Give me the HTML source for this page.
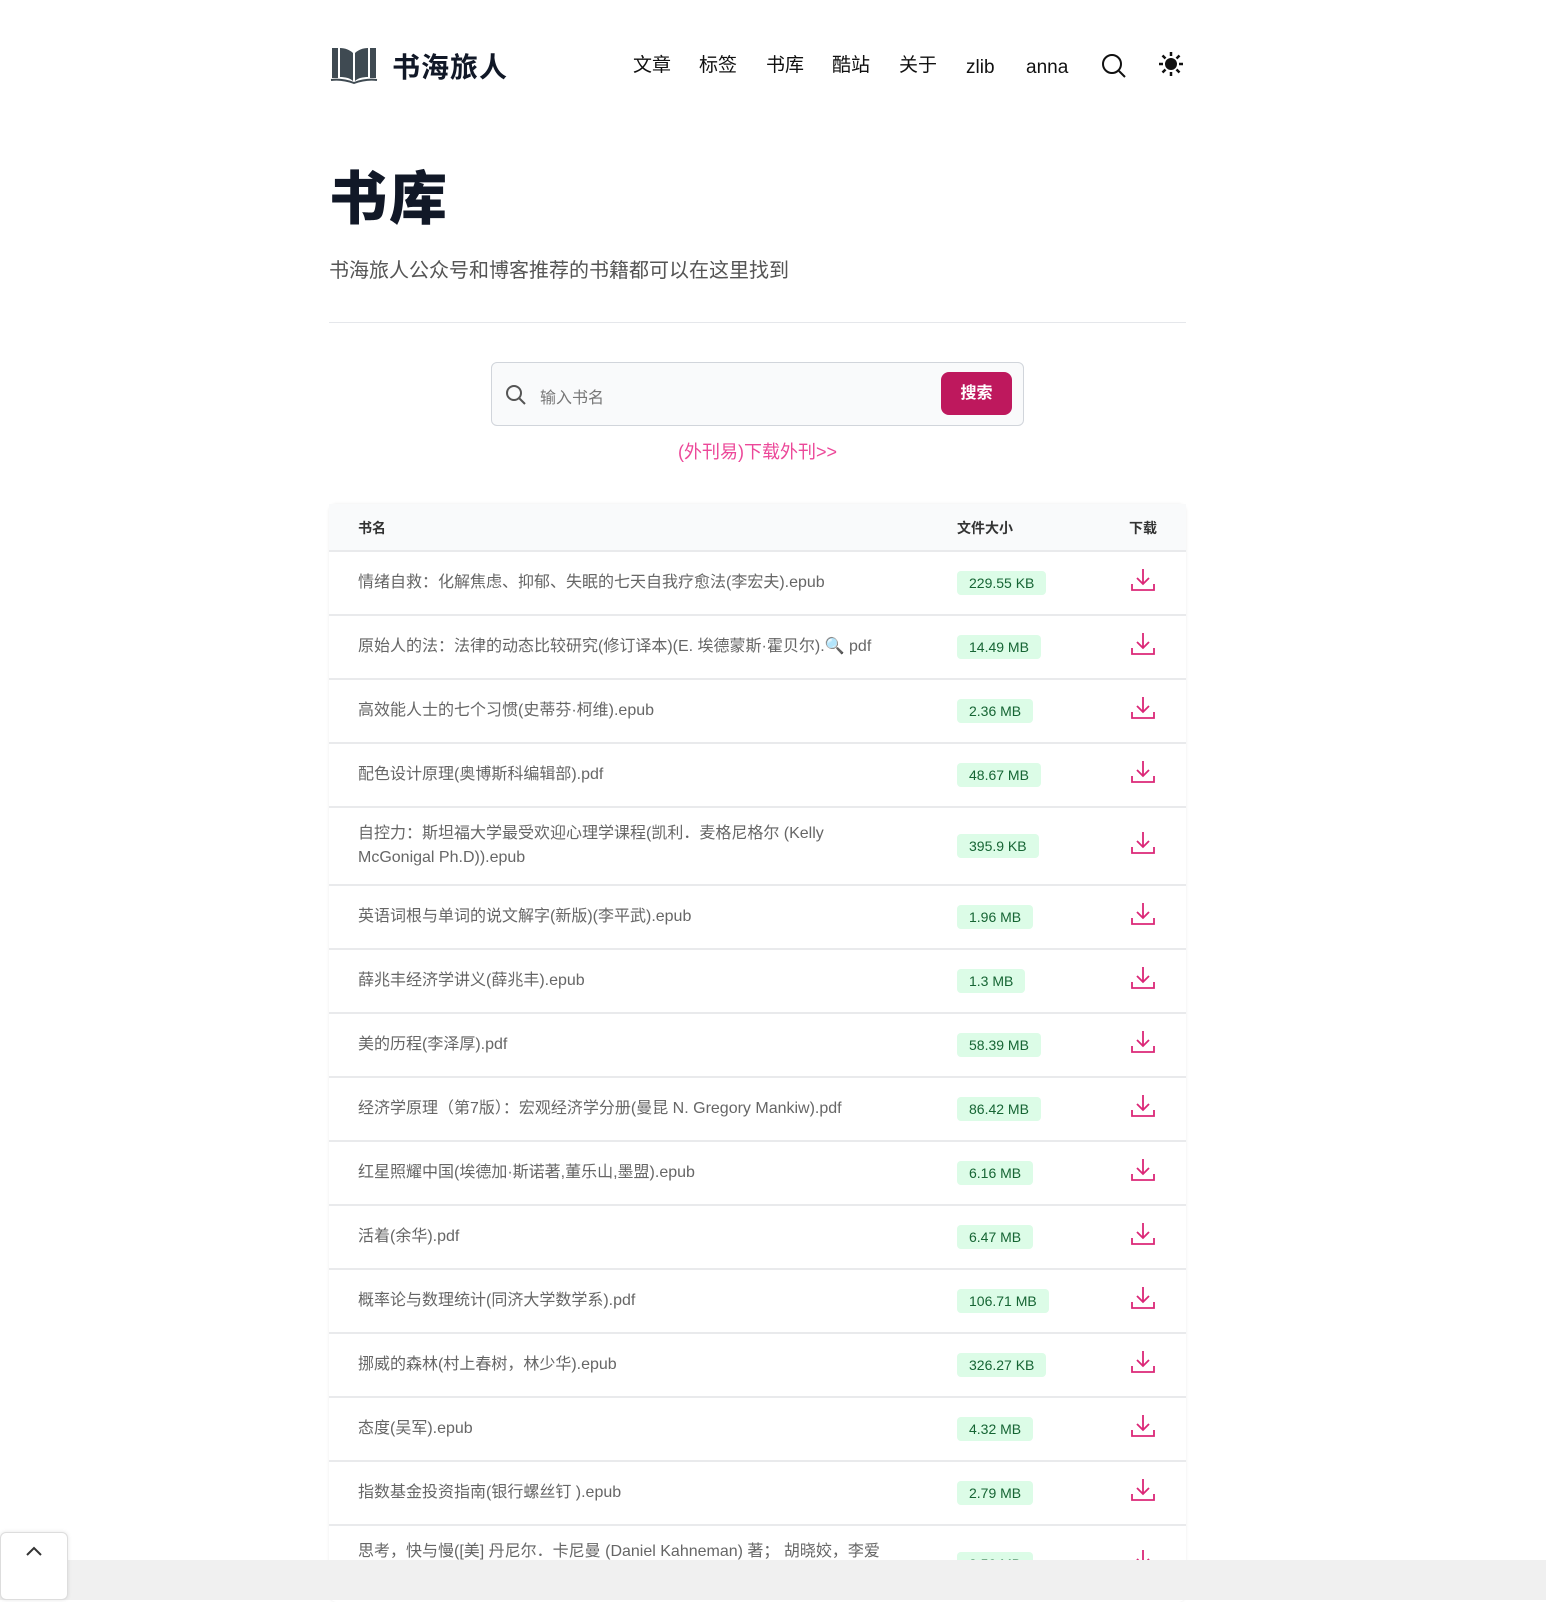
<!DOCTYPE html>
<html><head><meta charset="utf-8"><style>
*{margin:0;padding:0;box-sizing:border-box}
body{width:1546px;height:1600px;overflow:hidden;background:#fff;font-family:"Liberation Sans","Noto Sans CJK SC",sans-serif;color:#111827;position:relative}
.wrap{position:absolute;left:329px;width:857px;top:0}
.nav{position:absolute;top:0;left:0;width:857px;height:130px}
.logo{position:absolute;left:0;top:45px}
.brand{position:absolute;left:63px;top:46px;font-size:28px;font-weight:bold;letter-spacing:1px}
.menu{position:absolute;top:52px;font-size:19px;color:#111;height:28px;line-height:28px}
h1{position:absolute;top:152px;left:0;font-size:58px;font-weight:900;letter-spacing:2px}
.sub{position:absolute;top:254px;left:0;font-size:20px;color:#555}
.hr{position:absolute;top:322px;left:0;width:857px;height:1px;background:#e5e7eb}
.search{position:absolute;left:162px;top:362px;width:533px;height:64px;border:1px solid #d1d5db;border-radius:6px;background:#f9fafb}
.search .ph{position:absolute;left:48px;top:21px;font-size:16px;color:#777}
.btn{position:absolute;right:11px;top:9px;width:71px;height:43px;background:#be185d;border-radius:8px;color:#fff;font-size:16px;font-weight:bold;text-align:center;line-height:43px}
.wk{position:absolute;top:438px;left:0;width:857px;text-align:center;color:#ec4899;font-size:18px}
.table{position:absolute;top:504px;left:0;width:857px;border-radius:8px;box-shadow:0 0 3px rgba(0,0,0,.08)}
.th{height:46px;background:#f9fafb;position:relative;font-size:14px;color:#333;font-weight:bold}
.row{position:relative;border-top:2px solid #e9eaec;font-size:16px;color:#666}
.c1{position:absolute;left:29px;width:540px;line-height:24px}
.c2{position:absolute;left:628px}
.badge{display:inline-block;background:#dcfce7;color:#166534;font-size:14px;padding:0 12px;height:24px;line-height:24px;border-radius:4px}
.dl{position:absolute;left:801px}
.bar{position:absolute;left:0;top:1560px;width:1546px;height:40px;background:#f0f0f0}
.top{position:absolute;left:0;top:1532px;width:68px;height:68px;background:#fff;border:1px solid #ddd;border-radius:6px;box-shadow:0 0 4px rgba(0,0,0,.1)}
</style></head><body>
<div class="wrap">
 <div class="nav">
  <svg class="logo" width="50" height="40" viewBox="0 0 50 40"><path d="M3 3h6v30h-6zM11 3c5 0 10 2 13 5v28c-3-3-8-4-13-4zM26 8c3-3 8-5 13-5v29c-5 0-10 1-13 4zM41 3h6v30h-6z" fill="#3f4a52"/><path d="M2 35c8-1 15 0 23 3 8-3 15-4 23-3" stroke="#3f4a52" stroke-width="2" fill="none"/></svg>
  <div class="brand">书海旅人</div>
  <div class="menu" style="left:304px">文章</div>
  <div class="menu" style="left:370px">标签</div>
  <div class="menu" style="left:437px">书库</div>
  <div class="menu" style="left:503px">酷站</div>
  <div class="menu" style="left:570px">关于</div>
  <div class="menu" style="left:637px;top:54px">zlib</div>
  <div class="menu" style="left:697px;top:54px">anna</div>
  <svg style="position:absolute;left:772px;top:53px" width="26" height="26" viewBox="0 0 26 26"><circle cx="11" cy="11" r="9" stroke="#111" stroke-width="2" fill="none"/><path d="M18 18l6 6" stroke="#111" stroke-width="2"/></svg>
  <svg style="position:absolute;left:829px;top:51px" width="26" height="26" viewBox="0 0 26 26"><circle cx="13" cy="13" r="6" fill="#111"/><g stroke="#111" stroke-width="2.5"><path d="M13 1v4M13 21v4M1 13h4M21 13h4M4.5 4.5l3 3M18.5 18.5l3 3M4.5 21.5l3-3M18.5 7.5l3-3"/></g></svg>
 </div>
 <h1>书库</h1>
 <div class="sub">书海旅人公众号和博客推荐的书籍都可以在这里找到</div>
 <div class="hr"></div>
 <div class="search">
  <svg style="position:absolute;left:13px;top:21px" width="22" height="22" viewBox="0 0 22 22"><circle cx="9" cy="9" r="7" stroke="#555" stroke-width="2" fill="none"/><path d="M14 14l6 6" stroke="#555" stroke-width="2"/></svg>
  <div class="ph">输入书名</div><div class="btn">搜索</div>
 </div>
 <div class="wk">(外刊易)下载外刊&gt;&gt;</div>
 <div class="table">
  <div class="th"><span style="position:absolute;left:29px;top:14px">书名</span><span style="position:absolute;left:628px;top:14px">文件大小</span><span style="position:absolute;left:800px;top:14px">下载</span></div>
  <div id="rows"></div>
 </div>
</div>
<div class="bar"></div>
<div class="top"><svg style="position:absolute;left:24px;top:12px" width="18" height="12" viewBox="0 0 18 12"><path d="M2 10l7-7 7 7" stroke="#333" stroke-width="2" fill="none"/></svg></div>
<script>
var d=[["情绪自救：化解焦虑、抑郁、失眠的七天自我疗愈法(李宏夫).epub","229.55 KB"],["原始人的法：法律的动态比较研究(修订译本)(E. 埃德蒙斯·霍贝尔).🔍 pdf","14.49 MB"],["高效能人士的七个习惯(史蒂芬·柯维).epub","2.36 MB"],["配色设计原理(奥博斯科编辑部).pdf","48.67 MB"],["自控力：斯坦福大学最受欢迎心理学课程(凯利．麦格尼格尔 (Kelly McGonigal Ph.D)).epub","395.9 KB",76],["英语词根与单词的说文解字(新版)(李平武).epub","1.96 MB"],["薛兆丰经济学讲义(薛兆丰).epub","1.3 MB"],["美的历程(李泽厚).pdf","58.39 MB"],["经济学原理（第7版）：宏观经济学分册(曼昆 N. Gregory Mankiw).pdf","86.42 MB"],["红星照耀中国(埃德加·斯诺著,董乐山,墨盟).epub","6.16 MB"],["活着(余华).pdf","6.47 MB"],["概率论与数理统计(同济大学数学系).pdf","106.71 MB"],["挪威的森林(村上春树，林少华).epub","326.27 KB"],["态度(吴军).epub","4.32 MB"],["指数基金投资指南(银行螺丝钉 ).epub","2.79 MB"],["思考，快与慢([美] 丹尼尔．卡尼曼 (Daniel Kahneman) 著； 胡晓姣，李爱民，何梦莹 译).epub","3.50 MB",76]];
var h="";d.forEach(function(r){var H=r[2]||62;h+='<div class="row" style="height:'+(H+2)+'px"><div class="c1" style="top:'+(H/2-(H>70?24:12))+'px">'+r[0]+'</div><div class="c2" style="top:'+(H/2-12)+'px"><span class="badge">'+r[1]+'</span></div><svg class="dl" style="top:'+(H/2-16)+'px" width="26" height="26" viewBox="0 0 26 26"><path d="M13 2v15M7 11l6 6 6-6M2 17v6h22v-6" stroke="#db2777" stroke-width="1.8" fill="none"/></svg></div>'});
document.getElementById("rows").innerHTML=h;
</script>
</body></html>
